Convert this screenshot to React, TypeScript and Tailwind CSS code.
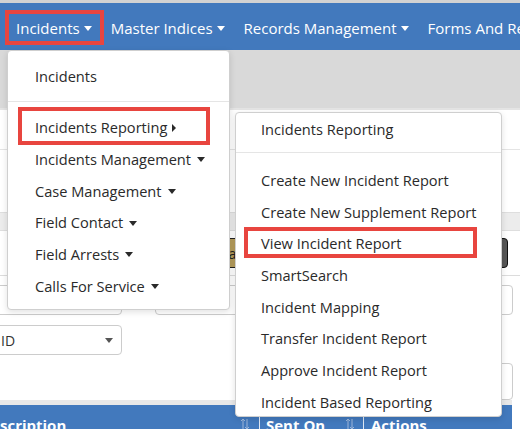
import React from "react";

function CaretDown({ className = "" }: { className?: string }) {
  return (
    <svg width="8" height="5" viewBox="0 0 8 5" className={className}>
      <path d="M0 0h8L4 5z" fill="currentColor" />
    </svg>
  );
}

function CaretRight() {
  return (
    <svg width="4" height="8" viewBox="0 0 4 8">
      <path d="M0 0l4 4-4 4z" fill="currentColor" />
    </svg>
  );
}

function SortIcon() {
  return (
    <svg width="10" height="12" viewBox="0 0 10 12">
      <path d="M3 11V1M1 3l2-2 2 2M7 1v10M5 9l2 2 2-2" stroke="#9db7da" fill="none" />
    </svg>
  );
}

const navItems = ["Incidents", "Master Indices", "Records Management", "Forms And Reports"];

const mainItems = [
  "Incidents Management",
  "Case Management",
  "Field Contact",
  "Field Arrests",
  "Calls For Service",
];

const subItems = [
  "Create New Incident Report",
  "Create New Supplement Report",
  "View Incident Report",
  "SmartSearch",
  "Incident Mapping",
  "Transfer Incident Report",
  "Approve Incident Report",
  "Incident Based Reporting",
];

function App() {
  return (
    <div className="relative w-[520px] h-[429px] overflow-hidden bg-white font-['Open_Sans',sans-serif]">
      {/* Top bar */}
      <div className="h-[3px] bg-[#d2d2d2]" />
      <nav className="h-[47px] bg-[#4279bd] flex items-center pl-[16px] gap-[19px] pt-[4px] whitespace-nowrap">
        {navItems.map((item, i) => (
          <div key={item} className="flex items-center gap-[4px] text-[15px] text-white">
            <span>{item}</span>
            {i < 3 && <CaretDown className="text-white" />}
          </div>
        ))}
      </nav>

      {/* Page behind menus */}
      <div className="h-[58px] bg-[#d9d9d9]" />
      <div className="h-[42px] border-t-2 border-b border-[#e4e4e4]" />
      <div className="h-[62px]" />
      <div className="h-[19px] bg-[#ececec] border-y border-[#dedede]" />
      <div className="h-[45px] flex items-center border-b border-[#dcdcdc]">
        <div className="ml-[200px] h-[30px] px-[12px] flex items-center bg-[#b59d5c] border border-[#222] rounded-[3px] text-[14px] text-[#222]">
          Search
        </div>
        <div className="ml-auto mr-[12px] h-[30px] w-[80px] bg-[#575757] border border-[#111] rounded-[4px]" />
      </div>
      <div className="flex mt-[9px] h-[30px]">
        <div className="-ml-[10px] w-[132px] border border-[#ccc] rounded-[4px]" />
        <div className="ml-[33px] w-[358px] border border-[#ccc] rounded-[4px]" />
      </div>
      <div className="flex mt-[10px] h-[30px]">
        <div className="-ml-[10px] w-[132px] border border-[#ccc] rounded-[4px] flex items-center justify-between pl-[10px] pr-[8px] text-[14px] text-[#333]">
          <span>ID</span>
          <CaretDown className="text-[#555]" />
        </div>
      </div>
      <div className="flex mt-[8px] h-[37px]">
        <div className="ml-[300px] w-[213px] border border-[#ccc] rounded-[4px]" />
      </div>
      <div className="h-[5px] bg-[#e8e8e8] mr-[8px]" />
      <div className="h-[30px] bg-[#4279bd] mr-[8px] flex text-white font-bold text-[15px] whitespace-nowrap">
        <div className="w-[259px] overflow-hidden flex items-start pt-[9px] pr-[9px]">
          <span className="-ml-[20px]">Description</span>
          <span className="ml-auto mt-[4px]"><SortIcon /></span>
        </div>
        <div className="w-[104px] border-l border-[#dfe8f4] flex items-start pt-[9px] pl-[6px] pr-[8px]">
          <span>Sent On</span>
          <span className="ml-auto mt-[4px]"><SortIcon /></span>
        </div>
        <div className="flex-1 border-l border-[#dfe8f4] pt-[9px] pl-[7px]">Actions</div>
      </div>

      {/* Main dropdown */}
      <div className="absolute left-[7px] top-[50px] w-[223px] h-[260px] bg-white border border-[#cfcfcf] rounded-[4px] shadow-[0_2px_6px_rgba(0,0,0,0.12)] pt-[10px] text-[14.6px] text-[#2a2a2a] whitespace-nowrap">
        <div className="h-[32px] flex items-center pl-[27px]">Incidents</div>
        <div className="mt-[8px] mb-[10px] border-t border-[#e5e5e5]" />
        <div className="h-[32px] flex items-center pl-[27px] gap-[5px]">
          <span>Incidents Reporting</span>
          <CaretRight />
        </div>
        {mainItems.map((item) => (
          <div key={item} className="h-[31.7px] flex items-center pl-[27px] gap-[6px]">
            <span>{item}</span>
            <CaretDown />
          </div>
        ))}
      </div>

      {/* Sub dropdown */}
      <div className="absolute left-[235px] top-[112px] w-[267px] h-[305px] bg-white border border-[#cfcfcf] rounded-[4px] shadow-[0_2px_6px_rgba(0,0,0,0.12)] text-[14.6px] text-[#2a2a2a] whitespace-nowrap">
        <div className="h-[33px] flex items-center pl-[25px]">Incidents Reporting</div>
        <div className="mt-[6px] mb-[12px] border-t border-[#e5e5e5]" />
        {subItems.map((item) => (
          <div key={item} className="h-[31.7px] flex items-center pl-[25px]">
            {item}
          </div>
        ))}
      </div>

      {/* Highlight boxes */}
      <div className="absolute left-[5px] top-[10px] w-[99px] h-[35px] border-4 border-[#e8453f]" />
      <div className="absolute left-[18px] top-[107px] w-[192px] h-[38px] border-4 border-[#e8453f]" />
      <div className="absolute left-[244px] top-[227px] w-[233px] h-[31px] border-4 border-[#e8453f]" />
    </div>
  );
}

export default App;
